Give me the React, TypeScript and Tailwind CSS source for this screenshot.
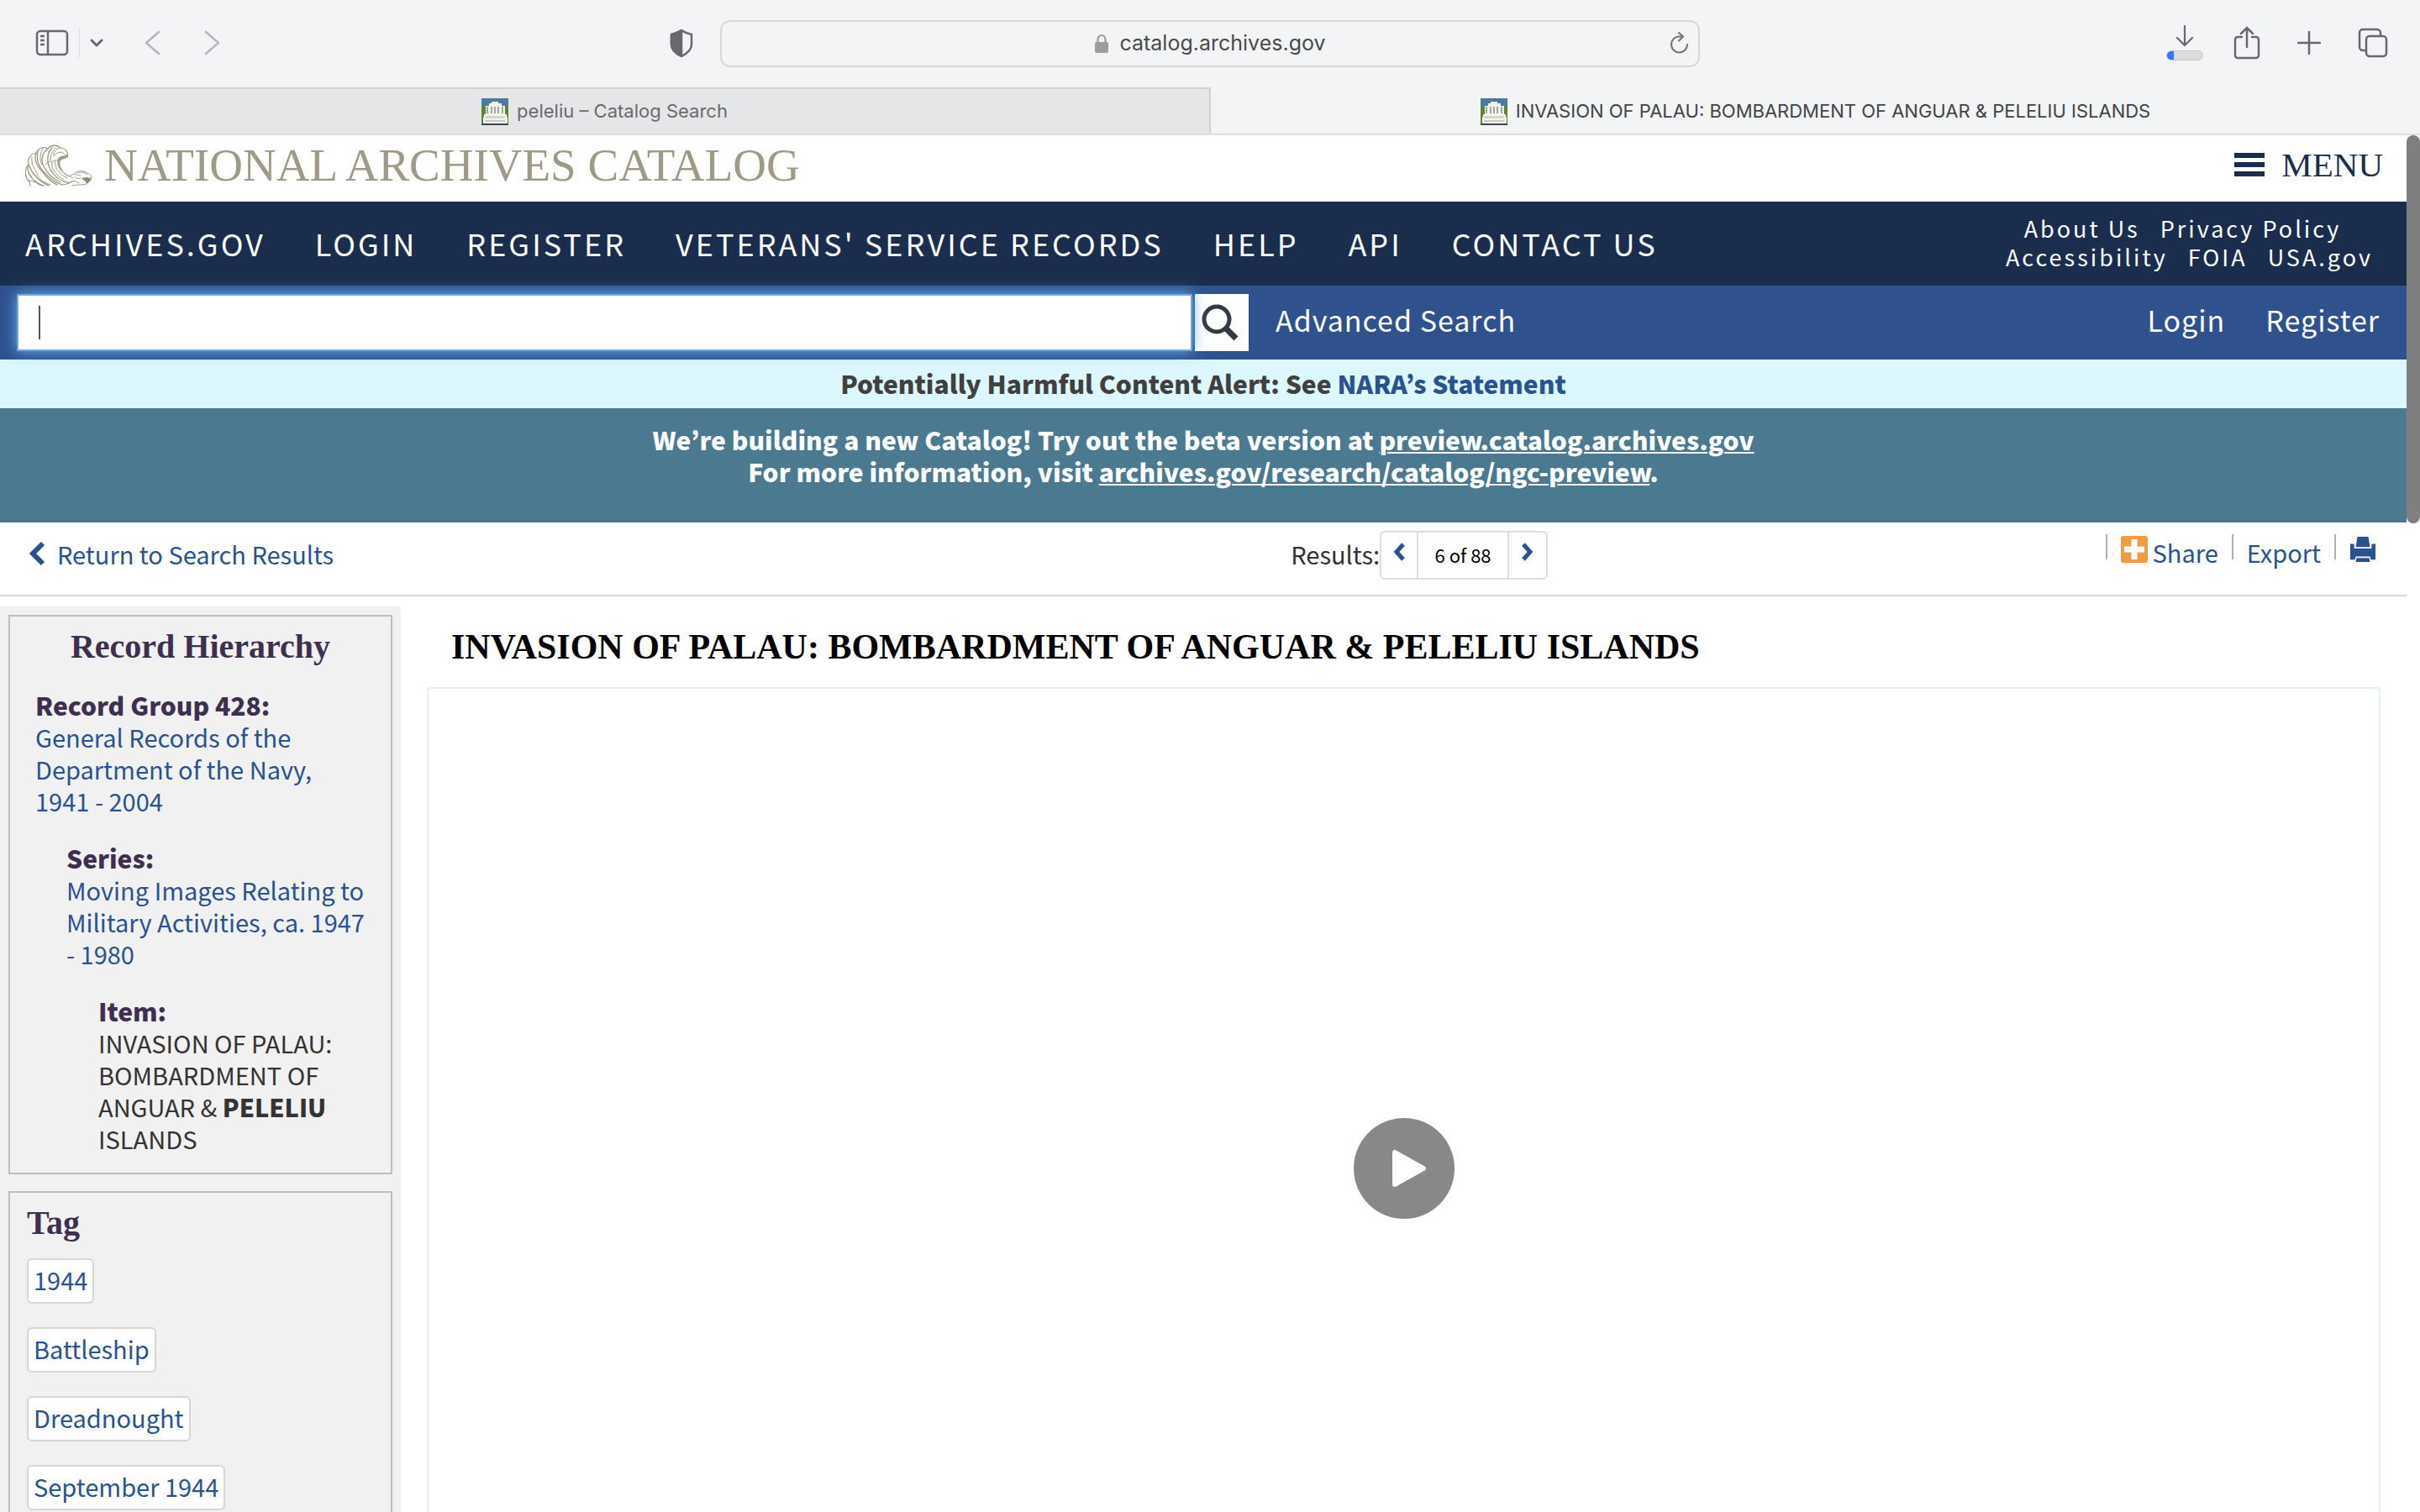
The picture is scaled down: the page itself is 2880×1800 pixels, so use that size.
import type { ReactNode } from "react";

const navLinks = ["ARCHIVES.GOV", "LOGIN", "REGISTER", "VETERANS' SERVICE RECORDS", "HELP", "API", "CONTACT US"];

const tags = ["1944", "Battleship", "Dreadnought", "September 1944"];

function Favicon() {
  return (
    <svg viewBox="0 0 32 32" className="size-8 shrink-0" aria-hidden="true">
      <rect width="32" height="10" fill="#4a7c9b" />
      <rect y="10" width="32" height="20" fill="#5d8233" />
      <rect y="30" width="32" height="2" fill="#3b4450" />
      <path d="M12 4h8v2h4v3h4v10h2v3h1v8H2v-8h1v-3h2V9h4V6h3z" fill="#f1f2e9" />
      <path d="M7 10v8M12 10v8M16 10v8M20 10v8M25 10v8" stroke="#a3a6a0" strokeWidth="2" />
      <path d="M4 22.500h24M4 27h24" stroke="#c9cac2" strokeWidth="2" />
    </svg>
  );
}

function EagleLogo() {
  return (
    <svg viewBox="4 4 80 50" className="h-[50px] w-20 shrink-0" fill="none" stroke="#9f9a86" strokeWidth="1" strokeLinecap="round" aria-hidden="true">
      <path d="M10 53C10 50 9 48 7 46C3 40 3 33 8 28C6 22 10 15 17 14C20 8 26 6 31 9C36 4 42 4 46 8C52 8 56 14 54 19" strokeWidth="1.200" />
      <path d="M31 9C33 6 38 4 42 6M46 8C42 8 38 11 38 18C42 12 48 12 51 16" />
      <path d="M7 29C6 40 14 49 26 53M8 28C12 38 20 48 32 53M17 14C14 22 18 30 25 37C30 44 36 49 42 52" strokeWidth="1.400" />
      <path d="M19 13C16 26 24 36 33 43C37 47 42 50 48 52M31 9C24 14 22 22 26 30C30 39 38 45 46 49M36 8C28 16 30 29 36 37C40 43 48 48 56 50" strokeWidth="1.300" />
      <path d="M12 19C11 26 14 33 19 39M25 9C21 15 21 22 24 28M41 7C36 12 34 17 34 23M28 28C30 24 34 23 36 25C38 22 43 22 45 24" />
      <path d="M36 25C34 32 40 40 50 46M40 23C38 31 44 39 54 44M44 24C43 32 48 38 56 42M10 40C12 45 17 50 22 53M7 46C14 48 19 50 24 53M18 40C21 46 28 50 34 52" />
      <path d="M54 19C50 22 47 20 45 24C44 29 47 33 49 37C43 32 41 25 44 20C47 17 50 19 54 16z" fill="#9f9a86" strokeWidth="0.800" />
      <path d="M49 37C53 41 58 42 61 44M56 42C60 38 65 40 70 41M62 39C66 35 73 34 78 38C82 40 84 43 82 47M66 38C70 36 75 37 78 40M56 50C60 46 65 48 68 50M48 52C54 52 58 49 62 47M60 53C66 51 72 53 77 51M63 43C65 45 68 45 70 44" />
      <path d="M71 44L77 43L82 44L81 48L77 51C77 47 73 47 71 44z" fill="#8f8a76" stroke="none" />
    </svg>
  );
}

function BrowserToolbar() {
  return (
    <div className="flex h-26 items-center px-[38px] text-[#69696d]">
      <div className="flex flex-1 items-center pb-0.5">
        <button aria-label="Sidebar">
          <svg viewBox="0 0 40 32" className="h-8 w-11 pl-1" fill="none" stroke="currentColor" strokeWidth="2.500">
            <rect x="2" y="2" width="36" height="28" rx="4" />
            <path d="M15 2v28M6 8h5M6 13h5M6 18h5" />
          </svg>
        </button>
        <span className="ml-3 h-9 w-px bg-[#dcdde0]" />
        <button aria-label="Tab groups" className="ml-2.5">
          <svg viewBox="0 0 20 20" className="size-5" fill="none" stroke="currentColor" strokeWidth="3" strokeLinecap="round" strokeLinejoin="round">
            <path d="M4 7l6 6 6-6" />
          </svg>
        </button>
        <button aria-label="Back" className="ml-11 text-[#b5b6b9]">
          <svg viewBox="0 0 24 32" className="h-8 w-6" fill="none" stroke="currentColor" strokeWidth="2.500" strokeLinecap="round" strokeLinejoin="round">
            <path d="M20 3L5 16l15 13" />
          </svg>
        </button>
        <button aria-label="Forward" className="ml-12 text-[#b5b6b9]">
          <svg viewBox="0 0 24 32" className="h-8 w-6" fill="none" stroke="currentColor" strokeWidth="2.500" strokeLinecap="round" strokeLinejoin="round">
            <path d="M4 3l15 13L4 29" />
          </svg>
        </button>
        <button aria-label="Privacy report" className="mr-8 ml-auto">
          <svg viewBox="0 0 28 34" className="h-[34px] w-7" fill="none" stroke="currentColor" strokeWidth="2.500" strokeLinejoin="round">
            <path d="M14 2C18 5 22 6 26 7v12c0 6-6 11-12 14C8 30 2 25 2 19V7c4-1 8-2 12-5z" />
            <path d="M14 2v31C8 30 2 25 2 19V7c4-1 8-2 12-5z" fill="currentColor" />
          </svg>
        </button>
      </div>

      <div className="relative flex h-14 w-[1166px] items-center justify-center rounded-xl border-2 border-[#d6d7d9] text-[25px] text-[#4a4b4d]">
        <svg viewBox="0 0 18 24" className="mr-3 h-6 w-[18px]" aria-hidden="true">
          <path d="M4.500 11V7a4.500 5 0 0 1 9 0v4" fill="none" stroke="#9c9d9f" strokeWidth="2.200" />
          <rect x="1" y="10" width="16" height="13" rx="2" fill="#9c9d9f" />
        </svg>
        catalog.archives.gov
        <button aria-label="Reload" className="absolute right-2 text-[#77787a]">
          <svg viewBox="0 0 28 28" className="size-7" fill="none" stroke="currentColor" strokeWidth="2.200" strokeLinecap="round">
            <path d="M23 15a9.500 9.500 0 1 1-9.500-9.500H18M13 1l5 4.500-5 5" />
          </svg>
        </button>
      </div>

      <div className="flex flex-1 items-center justify-end pb-0.5">
        <button aria-label="Downloads" className="flex flex-col items-center gap-1">
          <svg viewBox="0 0 24 26" className="h-[26px] w-6" fill="none" stroke="currentColor" strokeWidth="2.200" strokeLinecap="round">
            <path d="M12 1v23M3 15l9 9 9-9" />
          </svg>
          <span className="block h-3 w-11 overflow-hidden rounded-full border border-[#c9cacb] bg-[#dcdcdd]">
            <span className="block h-3 w-[18%] bg-[#3478f6]" />
          </span>
        </button>
        <button aria-label="Share page" className="ml-9">
          <svg viewBox="0 0 32 40" className="h-10 w-8" fill="none" stroke="currentColor" strokeWidth="2.500" strokeLinecap="round">
            <path d="M10 13H5a3 3 0 0 0-3 3v19a3 3 0 0 0 3 3h22a3 3 0 0 0 3-3V16a3 3 0 0 0-3-3h-5M16 25V2M9 9l7-7 7 7" />
          </svg>
        </button>
        <button aria-label="New tab" className="ml-11">
          <svg viewBox="0 0 28 28" className="size-7" fill="none" stroke="currentColor" strokeWidth="2.500" strokeLinecap="round">
            <path d="M14 1v26M1 14h26" />
          </svg>
        </button>
        <button aria-label="Tab overview" className="ml-11">
          <svg viewBox="0 0 36 36" className="size-9" fill="none" stroke="currentColor" strokeWidth="2.500">
            <rect x="10" y="10" width="24" height="24" rx="4" />
            <path d="M10 27H6a4 4 0 0 1-4-4V6a4 4 0 0 1 4-4h17a4 4 0 0 1 4 4v4" />
          </svg>
        </button>
      </div>
    </div>
  );
}

function TabBar() {
  return (
    <div className="flex h-[57px] border-b-2 border-[#dcdddf] text-[22px]">
      <a href="#search" className="flex flex-1 items-center justify-center gap-2.5 border-t-2 border-r-2 border-[#d0d1d3] bg-[#e5e6e8] text-[#6a6b6d]">
        <Favicon />
        peleliu – Catalog Search
      </a>
      <a href="#record" className="flex flex-1 items-center justify-center gap-2.5 border-t-2 border-transparent text-[#434446]">
        <Favicon />
        INVASION OF PALAU: BOMBARDMENT OF ANGUAR &amp; PELELIU ISLANDS
      </a>
    </div>
  );
}

function Header() {
  return (
    <header>
      <div className="flex h-[79px] items-center justify-between pr-7 pb-2 pl-[30px] font-['Liberation_Serif',serif]">
        <a href="#home" className="flex items-center gap-3.5 text-[55px] leading-[60px] text-[#9f9a86]">
          <EagleLogo />
          NATIONAL ARCHIVES CATALOG
        </a>
        <button className="flex items-center gap-5 pb-0.5 text-[41px] leading-[60px] text-[#1a2d4d]">
          <span className="flex flex-col gap-[5px]">
            <span className="block h-1.5 w-9 bg-[#1a2d4d]" />
            <span className="block h-1.5 w-9 bg-[#1a2d4d]" />
            <span className="block h-1.5 w-9 bg-[#1a2d4d]" />
          </span>
          MENU
        </button>
      </div>

      <nav className="flex h-25 items-center justify-between bg-[#1a2d4d] px-[30px] pb-[3px] text-white">
        <div className="flex gap-[59px] text-[36px] leading-[50px] tracking-[3px]">
          {navLinks.map((link) => (
            <a key={link} href="#nav">
              {link}
            </a>
          ))}
        </div>
        <div className="mr-2.5 text-center text-[27px] leading-[34px] tracking-[3px]">
          <div className="flex justify-center gap-6 pr-4">
            <a href="#about">About Us</a>
            <a href="#privacy">Privacy Policy</a>
          </div>
          <div className="flex justify-center gap-6">
            <a href="#accessibility">Accessibility</a>
            <a href="#foia">FOIA</a>
            <a href="#usa">USA.gov</a>
          </div>
        </div>
      </nav>

      <div className="flex h-22 items-center bg-[#2f528f] pr-8 pl-5 text-[34px] leading-[50px] tracking-[1px] text-white">
        <div className="relative">
          <input
            type="text"
            aria-label="Search the catalog"
            className="block h-17 w-[1399px] border-2 border-[#70a9e3] bg-white px-6 text-3xl text-gray-800 shadow-[0_0_16px_#66afe9] outline-none"
          />
          <span className="absolute top-3.5 left-[26px] h-10 w-0.5 bg-[#555]" />
        </div>
        <button aria-label="Search" className="ml-[3px] flex h-17 w-16 items-center justify-center bg-white pr-1">
          <svg viewBox="0 0 46 46" className="size-[46px]" fill="none" stroke="#333a44" strokeWidth="5">
            <circle cx="19" cy="19" r="15" />
            <path d="M29 29l13 13" strokeWidth="7" />
          </svg>
        </button>
        <a href="#advanced" className="ml-8 pb-1.5">
          Advanced Search
        </a>
        <a href="#login" className="mr-12 ml-auto pb-1.5">
          Login
        </a>
        <a href="#register" className="pb-1.5">
          Register
        </a>
      </div>
    </header>
  );
}

function ResultsBar() {
  return (
    <div className="flex h-22 items-start border-b-2 border-[#d8d8d8] pr-9 pl-8 leading-[38px] text-[#2a5291]">
      <a href="#results" className="mt-[18px] flex w-[53.8%] items-center gap-3">
        <svg viewBox="0 0 24 30" className="h-[30px] w-6" fill="none" stroke="currentColor" strokeWidth="6">
          <path d="M19 3L7 15l12 12" />
        </svg>
        Return to Search Results
      </a>
      <div className="mt-2.5 flex items-start">
        <span className="mt-2 text-[#333]">Results:</span>
        <div className="flex h-[58px] items-stretch divide-x-2 divide-[#ddd] rounded-md border-2 border-[#ddd]">
          <button aria-label="Previous result" className="w-11 pb-2">
            <svg viewBox="0 0 16 22" className="mx-auto h-[22px] w-4" fill="none" stroke="currentColor" strokeWidth="5">
              <path d="M13 2l-8 9 8 9" />
            </svg>
          </button>
          <span className="flex w-[108px] items-center justify-center pb-0.5 text-[22px] text-black">6 of 88</span>
          <button aria-label="Next result" className="w-11 pb-2">
            <svg viewBox="0 0 16 22" className="mx-auto h-[22px] w-4" fill="none" stroke="currentColor" strokeWidth="5">
              <path d="M3 2l8 9-8 9" />
            </svg>
          </button>
        </div>
      </div>
      <div className="mt-3.5 flex flex-1 justify-end">
        <span className="mr-4 h-[30px] w-0.5 bg-[#b0b0b0]" />
        <a href="#share" className="flex">
          <svg viewBox="0 0 32 32" className="mt-0.5 mr-1.5 size-8" aria-hidden="true">
            <rect width="32" height="32" rx="3" fill="#ee9d42" />
            <path d="M12.500 4h7v8.500H28v7h-8.500V28h-7v-8.500H4v-7h8.500z" fill="#fff" />
          </svg>
          <span className="mt-0.5">Share</span>
        </a>
        <span className="mx-4 h-[30px] w-0.5 bg-[#b0b0b0]" />
        <a href="#export" className="mt-0.5">
          Export
        </a>
        <span className="mx-4 h-[30px] w-0.5 bg-[#b0b0b0]" />
        <button aria-label="Print" className="mt-0.5 size-8">
          <svg viewBox="0 0 34 32" className="size-8" fill="currentColor">
            <path d="M10 0h14l2 13H8z" />
            <path d="M1 9h5v6h22V9h5v20h-6l-1-4H8l-1 4H1z" />
            <path d="M9 27h16l1 5H8z" />
          </svg>
        </button>
      </div>
    </div>
  );
}

function HierarchyLevel({ label, children }: { label: string; children: ReactNode }) {
  return (
    <div className="mb-[30px] leading-[38px]">
      <div className="text-[30px] leading-[38px] font-black text-[#3e2f50]">{label}</div>
      {children}
    </div>
  );
}

function Sidebar() {
  return (
    <aside className="w-[477px] shrink-0 bg-[#f1f1f1] px-2.5 pt-2.5">
      <section className="border-2 border-[#bdbdbd] px-[30px] pt-3.5">
        <h2 className="mb-7 text-center font-['Liberation_Serif',serif] text-[40px] leading-11 font-bold text-[#3e2f50]">Record Hierarchy</h2>
        <HierarchyLevel label="Record Group 428:">
          <a href="#group" className="text-[#2a5291]">
            General Records of the Department of the Navy, 1941 - 2004
          </a>
        </HierarchyLevel>
        <div className="-mr-2 pl-[37px]">
          <HierarchyLevel label="Series:">
            <a href="#series" className="text-[#2a5291]">
              Moving Images Relating to Military Activities, ca. 1947 - 1980
            </a>
          </HierarchyLevel>
        </div>
        <div className="-mb-2 pl-[75px] text-[#333]">
          <HierarchyLevel label="Item:">
            INVASION OF PALAU: BOMBARDMENT OF ANGUAR &amp; <b className="font-black">PELELIU</b> ISLANDS
          </HierarchyLevel>
        </div>
      </section>

      <section className="mt-5 border-2 border-[#bdbdbd] px-5 pt-3.5 pb-7">
        <h2 className="font-['Liberation_Serif',serif] text-[40px] leading-11 font-bold text-[#3e2f50]">Tag</h2>
        <ul className="mt-5 flex flex-col items-start gap-7">
          {tags.map((tag) => (
            <li key={tag}>
              <a href="#tag" className="block rounded-md border-2 border-[#d6d6d6] bg-white px-1.5 pt-1 pb-2 leading-[38px] text-[#2a5291]">
                {tag}
              </a>
            </li>
          ))}
        </ul>
      </section>
    </aside>
  );
}

export default function App() {
  return (
    <div className="flex h-screen flex-col overflow-hidden bg-[#f3f4f6] font-['Inter',sans-serif]">
      <BrowserToolbar />
      <TabBar />
      <div className="flex min-h-0 flex-1 bg-white font-['Noto_Sans_CJK_KR',sans-serif] text-[29px]">
        <div className="min-w-0 flex-1">
          <Header />
          <div className="h-[58px] bg-[#dcf7fd] text-center text-[30px] leading-[56px] font-black text-[#404040]">
            Potentially Harmful Content Alert: See{" "}
            <a href="#statement" className="text-[#2a5291]">
              NARA’s Statement
            </a>
          </div>
          <div className="h-34 bg-[#4a7990] pt-[18px] text-center text-[30px] leading-[38px] font-black text-white">
            <p>
              We’re building a new Catalog! Try out the beta version at{" "}
              <a href="#preview" className="underline decoration-2 underline-offset-2">
                preview.catalog.archives.gov
              </a>
            </p>
            <p>
              For more information, visit{" "}
              <a href="#ngc" className="underline decoration-2 underline-offset-2">
                archives.gov/research/catalog/ngc-preview
              </a>
              .
            </p>
          </div>
          <ResultsBar />
          <div className="mt-3 flex">
            <Sidebar />
            <main className="min-w-0 flex-1 pr-[31px] pl-[31px]">
              <h1 className="pt-[18px] pb-[18px] pl-[29px] font-['Liberation_Serif',serif] text-[42px] leading-[60px] font-bold text-black">
                INVASION OF PALAU: BOMBARDMENT OF ANGUAR &amp; PELELIU ISLANDS
              </h1>
              <div className="flex h-[1146px] items-center justify-center border-2 border-[#e4f0f7]">
                <button aria-label="Play video" className="size-[120px] rounded-full bg-[#888]">
                  <svg viewBox="0 0 120 120" className="size-[120px]" fill="#fff" stroke="#fff" strokeWidth="6" strokeLinejoin="round">
                    <path d="M49 41v38l34-19z" />
                  </svg>
                </button>
              </div>
            </main>
          </div>
        </div>
        <div className="w-4 shrink-0">
          <div className="h-[462px] rounded-full bg-[#7f7f7f]" />
        </div>
      </div>
    </div>
  );
}
